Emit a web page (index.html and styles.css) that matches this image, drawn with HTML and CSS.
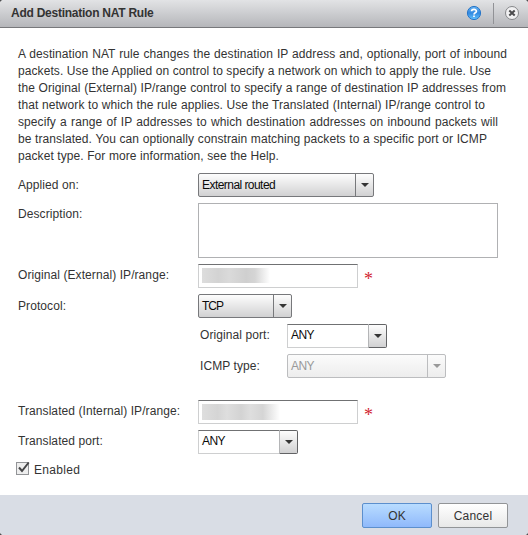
FILE: index.html
```html
<!DOCTYPE html>
<html lang="en">
<head>
<meta charset="utf-8">
<title>Add Destination NAT Rule</title>
<link rel="stylesheet" href="styles.css">
</head>
<body>
<div class="dialog">
  <header class="titlebar">
    <h1>Add Destination NAT Rule</h1>
    <svg class="help" width="16" height="16" viewBox="0 0 16 16">
      <defs><linearGradient id="blue" x1="0" y1="0" x2="0" y2="1"><stop offset="0" stop-color="#69b5f2"/><stop offset=".5" stop-color="#3288e0"/><stop offset="1" stop-color="#66c4ff"/></linearGradient></defs>
      <circle cx="8" cy="8" r="6.6" fill="url(#blue)" stroke="#2876c8"/>
      <path d="M5.6 6.3C5.6 3.8 10.4 3.8 10.4 6.2C10.4 7.8 8 7.8 8 9.5M8 10.6V12.1" fill="none" stroke="#fff" stroke-width="1.7"/>
    </svg>
    <i class="divider"></i>
    <svg class="close" width="16" height="16" viewBox="0 0 16 16">
      <circle cx="8" cy="8" r="6.5" fill="#f1f1f2" stroke="#858689"/>
      <path d="M5.3 5.5L10.7 10.5M10.7 5.5L5.3 10.5" stroke="#4b4b4d" stroke-width="2"/>
    </svg>
  </header>
  <main class="content">
    <p class="intro">
      <span class="l1">A destination NAT rule changes the destination IP address and, optionally, port of inbound</span>
      <span class="l2">packets. Use the Applied on control to specify a network on which to apply the rule. Use</span>
      <span class="l3">the Original (External) IP/range control to specify a range of destination IP addresses from</span>
      <span class="l4">that network to which the rule applies. Use the Translated (Internal) IP/range control to</span>
      <span class="l5">specify a range of IP addresses to which destination addresses on inbound packets will</span>
      <span class="l6">be translated. You can optionally constrain matching packets to a specific port or ICMP</span>
      <span class="l7">packet type. For more information, see the Help.</span>
    </p>
    <div class="row"><span class="label">Applied on:</span><div class="select w176"><span>External routed</span><b class="arrow"></b></div></div>
    <div class="row tall"><span class="label">Description:</span><div class="textarea"></div></div>
    <div class="row"><span class="label raised">Original (External) IP/range:</span><div class="input"><i class="mask short"></i></div><span class="star">*</span></div>
    <div class="row"><span class="label">Protocol:</span><div class="select w94"><span>TCP</span><b class="arrow"></b></div></div>
    <div class="row sub"><span class="label raised">Original port:</span><div class="combo"><span>ANY</span><b class="arrow"></b></div></div>
    <div class="row sub"><span class="label">ICMP type:</span><div class="select disabled w159"><span>ANY</span><b class="arrow"></b></div></div>
    <div class="row gap"><span class="label raised">Translated (Internal) IP/range:</span><div class="input"><i class="mask"></i></div><span class="star">*</span></div>
    <div class="row"><span class="label raised">Translated port:</span><div class="combo"><span>ANY</span><b class="arrow"></b></div></div>
    <div class="check">
      <svg width="15" height="15" viewBox="0 0 15 15"><rect x=".5" y="1.5" width="12" height="12" fill="#eee" stroke="#929497"/><path d="M3 6.5L6 10L12.7 1.5" fill="none" stroke="#454547" stroke-width="2"/></svg>
      <span>Enabled</span>
    </div>
  </main>
  <footer class="footer"><button class="ok">OK</button><button>Cancel</button></footer>
</div>
</body>
</html>
```
FILE: styles.css
```css
* { box-sizing: border-box; }
body { margin: 0; background: #4d4e50; font: 12px/17px "Liberation Sans", Arial, sans-serif; color: #333; }
.dialog { width: 528px; height: 535px; display: flex; flex-direction: column; background: #fff; border-radius: 4px; overflow: hidden; }
.titlebar { height: 28px; flex: none; display: flex; align-items: center; padding: 0 8px 1px 11px; background: linear-gradient(#e2e3e5, #b5b6ba); border-bottom: 1px solid #77787b; }
h1 { margin: 0; flex: 1; font-size: 12px; line-height: 16px; letter-spacing: -.25px; }
.titlebar svg { flex: none; }
.divider { width: 1px; height: 21px; background: #919296; margin: 0 10px 0 11px; }
.close { margin-top: -1px; }
.content { flex: 1; padding: 18px 0 0 18px; }
.intro { margin: 0 0 8px; height: 119px; white-space: nowrap; letter-spacing: .08px; }
.intro span { display: block; text-align-last: justify; }
.l1 { width: 489px; }
.l2 { width: 473px; }
.l3 { width: 488px; }
.l4 { width: 467px; }
.l5 { width: 480px; }
.l6 { width: 469px; }
.l7 { width: 261px; }
.row { display: flex; height: 24px; margin-bottom: 6px; }
.label { width: 180px; flex: none; line-height: 24px; letter-spacing: .08px; white-space: nowrap; }
.raised { line-height: 22px; }
.tall { height: 55px; }
.tall .label { line-height: 22px; }
.textarea { width: 300px; height: 55px; border: 1px solid #b0b1b3; }
.sub { padding-left: 182px; }
.sub .label { width: 87px; }
.gap { margin-top: 22px; }
.select, .combo { display: flex; height: 24px; border: 1px solid #77787b; border-radius: 2px; background: linear-gradient(#fdfdfd, #d1d1d2); color: #0b0b0b; letter-spacing: -.55px; }
.select span, .combo span { flex: 1; padding-left: 3px; line-height: 22px; }
.w176 { width: 176px; }
.w94 { width: 94px; }
.w159 { width: 159px; }
.w94 span { letter-spacing: -1px; }
.arrow { width: 18px; flex: none; border-left: 1px solid #77787b; display: flex; align-items: center; justify-content: center; }
.arrow::before { content: ""; border: 4px solid transparent; border-top-color: #353535; border-bottom: 0; }
.disabled { color: #999; border-color: #bcbdbf; background: linear-gradient(#fbfbfb, #ededed); }
.disabled .arrow { border-color: #bcbdbf; }
.disabled .arrow::before { border-top-color: #999; }
.combo { width: 100px; border: 0; background: none; }
.combo span { border: 1px solid #cecfd0; border-top-color: #707173; border-right: 0; background: #fff; line-height: 21px; }
.combo .arrow { width: 19px; border: 1px solid #626365; border-left-color: #b4b5b7; border-radius: 0 2px 2px 0; background: linear-gradient(#fdfdfd, #d1d1d2); }
.input { width: 160px; height: 24px; border: 1px solid #cecfd0; border-top-color: #707173; padding: 3px; }
.mask { display: block; width: 78px; height: 16px; background: linear-gradient(90deg, #dedede 0, #d5d5d5 20%, #dedede 32%, #d3d3d3 50%, #dedede 62%, #d5d5d5 78%, #fff); }
.mask.short { width: 68px; height: 15px; background: linear-gradient(90deg, #ddd 0, #d3d3d3 24%, #dadada 40%, #cfcfcf 65%, #d5d5d5 78%, #fff); }
.star { color: #d22630; font: 18px/31px "Liberation Serif", serif; margin-left: 6px; }
.check { display: flex; gap: 3px; margin: 7px 0 0 -2px; letter-spacing: .3px; }
.check svg { flex: none; }
.check span { line-height: 18px; }
.footer { height: 40px; flex: none; display: flex; justify-content: flex-end; gap: 6px; padding: 8px 20px 0 0; background: #d9dde5; }
button { width: 70px; height: 25px; padding: 0; border: 1px solid #929497; border-radius: 2px; background: linear-gradient(#fff, #e8e8e8); font: 12px "Liberation Sans", Arial, sans-serif; letter-spacing: .2px; color: #333; }
.ok { border-color: #5c8fcd; background: linear-gradient(#b9dcff, #8fb9fb); }
```
